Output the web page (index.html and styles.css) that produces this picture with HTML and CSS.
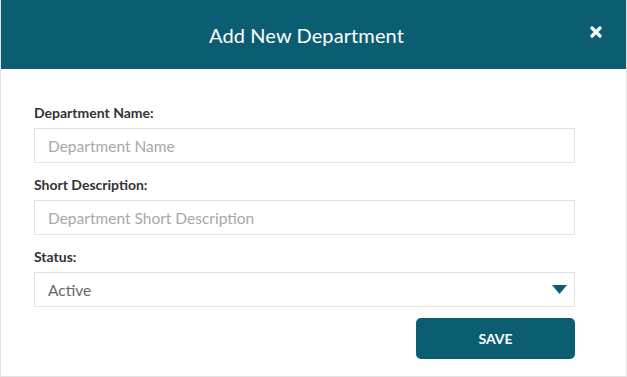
FILE: index.html
```html
<!DOCTYPE html>
<html lang="en">
<head>
  <meta charset="UTF-8" />
  <meta name="viewport" content="width=device-width, initial-scale=1.0"/>
  <title>Add New Department</title>
  <link rel="stylesheet" href="styles.css">
</head>
<body>
  <div class="modal">
    <div class="modal-header">
      <h2>Add New Department</h2>
      <button class="close-btn" type="button" aria-label="Close">
        <svg width="12" height="12" viewBox="0 0 12 12">
          <path d="M2 2 L10 10 M10 2 L2 10" stroke="#fff" stroke-width="3.2" stroke-linecap="round"/>
        </svg>
      </button>
    </div>

    <form class="modal-body" id="deptForm">
      <div class="field">
        <label for="deptName">Department Name:</label>
        <input type="text" id="deptName" placeholder="Department Name" />
      </div>
      <div class="field">
        <label for="deptDesc">Short Description:</label>
        <input type="text" id="deptDesc" placeholder="Department Short Description" />
      </div>
      <div class="field">
        <label for="deptStatus">Status:</label>
        <div class="select-wrap">
          <select id="deptStatus">
            <option>Active</option>
            <option>Inactive</option>
          </select>
          <svg class="caret" width="15" height="9" viewBox="0 0 15 9">
            <path d="M0 0 H15 L7.5 9 Z" fill="#0b5e72"/>
          </svg>
        </div>
      </div>
      <div class="actions">
        <button type="submit" class="save-btn">SAVE</button>
      </div>
    </form>
  </div>
</body>
</html>
```

FILE: styles.css
```css
* {
  box-sizing: border-box;
}

body {
  margin: 0;
  font-family: Lato, "Open Sans", sans-serif;
  background: #fff;
}

.modal {
  width: 627px;
  height: 377px;
  border: 1px solid #e4e4e4;
  border-top: none;
  display: flex;
  flex-direction: column;
}

.modal-header {
  position: relative;
  height: 69px;
  padding-right: 14px;
  background: #0b5e72;
  display: flex;
  align-items: center;
  justify-content: center;
}

.modal-header h2 {
  margin: 0;
  color: #fff;
  font-size: 20px;
  font-weight: 400;
  letter-spacing: 0.1px;
}

.close-btn {
  position: absolute;
  right: 24px;
  top: 26px;
  padding: 0;
  border: none;
  background: none;
  cursor: pointer;
  display: flex;
}

.modal-body {
  padding: 34px 51px 17px 33px;
  display: flex;
  flex-direction: column;
  gap: 12px;
}

.field {
  display: flex;
  flex-direction: column;
  gap: 5px;
}

label {
  font-size: 14px;
  line-height: 20px;
  font-weight: 700;
  color: #333;
}

input,
select {
  width: 100%;
  height: 35px;
  padding: 0 13px;
  font-family: inherit;
  font-size: 15.5px;
  color: #666;
  border: 1px solid #e2e2e2;
  border-radius: 0;
  background: #fff;
  outline: none;
}

input::placeholder {
  color: #a8a8a8;
}

.select-wrap {
  position: relative;
}

select {
  appearance: none;
  -webkit-appearance: none;
}

.caret {
  position: absolute;
  right: 8px;
  top: 13px;
  pointer-events: none;
}

.actions {
  display: flex;
  justify-content: flex-end;
  margin-top: -1px;
}

.save-btn {
  width: 159px;
  height: 41px;
  border: none;
  border-radius: 5px;
  background: #0b5e72;
  color: #fff;
  font-family: inherit;
  font-size: 14px;
  font-weight: 700;
  cursor: pointer;
}
```
